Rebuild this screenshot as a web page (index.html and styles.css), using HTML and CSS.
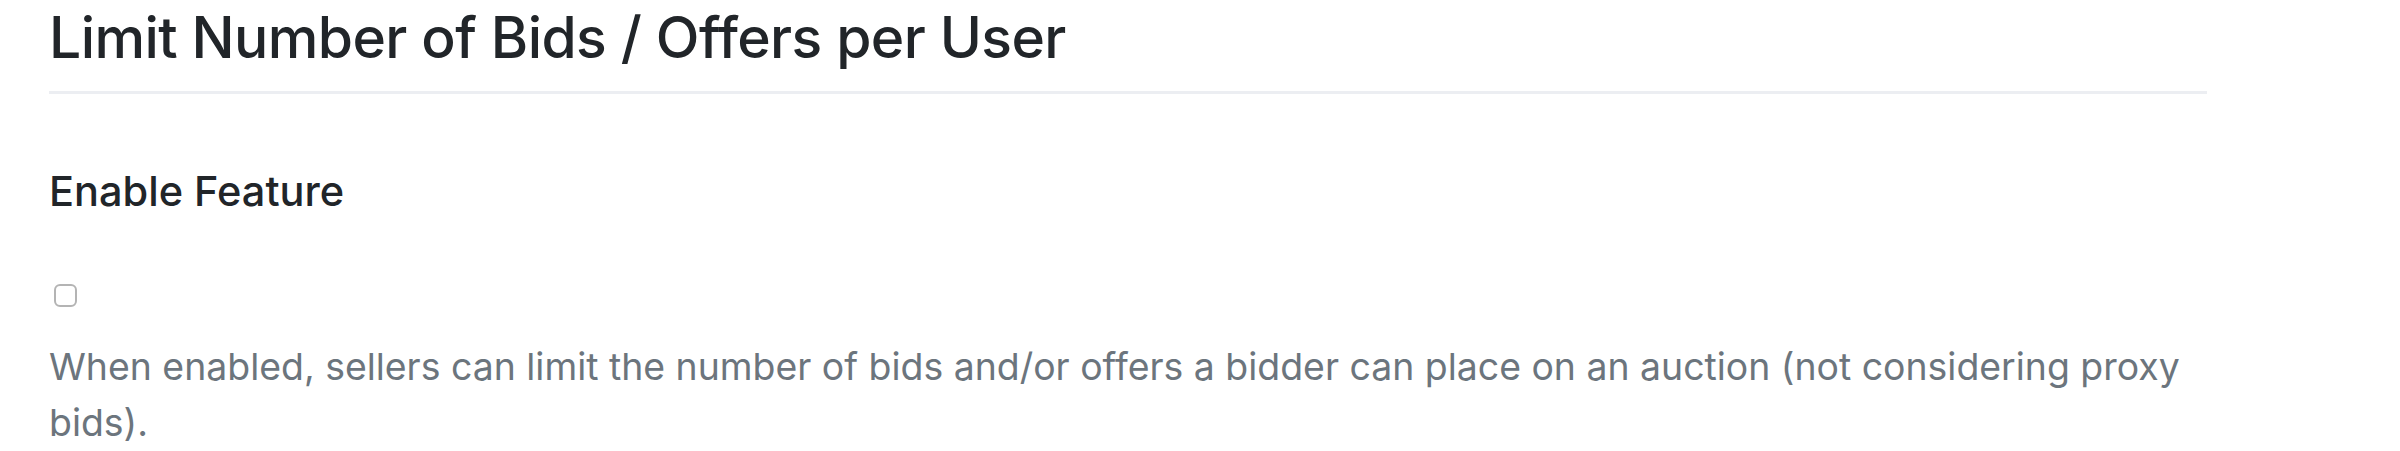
FILE: index.html
```html
<!DOCTYPE html>
<html lang="en">
<head>
    <meta charset="UTF-8">
    <meta name="viewport" content="width=device-width, initial-scale=1.0">
    <title>Limit Number of Bids / Offers per User</title>
    <link rel="stylesheet" href="styles.css">
</head>
<body>
    <div class="settings">
        <h2 class="title">Limit Number of Bids / Offers per User</h2>
        <hr class="divider">
        <label class="label" for="enable">Enable Feature</label>
        <input type="checkbox" id="enable" class="check">
        <p class="help">When enabled, sellers can limit the number of bids and/or offers a bidder can place on an auction (not considering proxy bids).</p>
    </div>
</body>
</html>
```
FILE: styles.css
```css
 body{
     margin: 0;
     background-color: white;
     font-family: Inter, "Noto Sans", sans-serif;
 }
 .settings{
     display: flex;
     flex-direction: column;
     align-items: flex-start;
     width: 2158px;
     padding-left: 49px;
 }
 .title{
     margin: 0;
     padding-top: 3px;
     font-size: 57px;
     letter-spacing: -0.6px;
     line-height: 70px;
     font-weight: 500;
     color: #212529;
 }
 .divider{
     align-self: stretch;
     margin: 18px 0 0 0;
     border: none;
     height: 3px;
     background-color: #eceef2;
 }
 .label{
     margin-top: 72px;
     font-size: 41.5px;
     line-height: 50px;
     font-weight: 500;
     color: #212529;
 }
 .check{
     appearance: none;
     margin: 68px 0 0 5px;
     width: 23px;
     height: 23px;
     border: 2px solid #b4b4b4;
     border-radius: 6px;
     background-color: white;
     box-sizing: border-box;
 }
 .help{
     margin: 32px 0 0 0;
     font-size: 37.4px;
     line-height: 56px;
     color: #6c757d;
 }
```
